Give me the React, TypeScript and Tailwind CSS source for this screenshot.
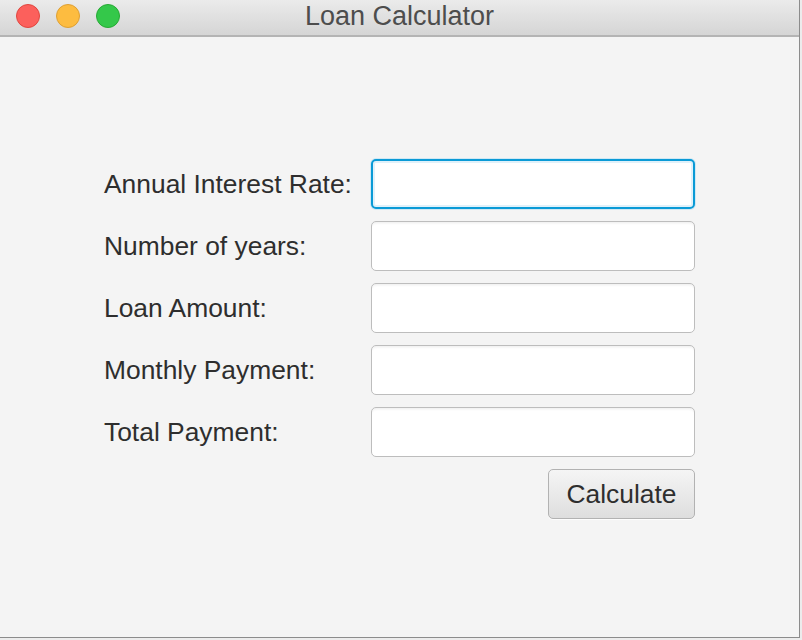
import React from 'react';

const fields = [
  'Annual Interest Rate:',
  'Number of years:',
  'Loan Amount:',
  'Monthly Payment:',
  'Total Payment:',
];

const App: React.FC = () => {
  return (
    <div className="w-[802px] h-[640px] bg-[#ececec] font-['Liberation_Sans',Arial,sans-serif]">
      <div className="w-[800px] h-[638px] bg-[#f4f4f4] border-r border-b border-[#8c8c8c] flex flex-col">
        {/* title bar */}
        <div className="relative h-[37px] shrink-0 bg-gradient-to-b from-[#ebebeb] to-[#d5d5d5] border-b-2 border-[#b4b4b4] flex items-center justify-center">
          <div className="absolute left-[16px] top-[4px] flex gap-[16px]">
            <span className="w-[24px] h-[24px] rounded-full bg-[#fc605c] border border-[#e0473f]" />
            <span className="w-[24px] h-[24px] rounded-full bg-[#fdbc40] border border-[#dea034]" />
            <span className="w-[24px] h-[24px] rounded-full bg-[#34c84a] border border-[#27a934]" />
          </div>
          <span className="text-[27px] leading-none text-[#4d4d4d] -mt-[3px]">Loan Calculator</span>
        </div>

        {/* form */}
        <div className="pt-[122px] pl-[104px]">
          <div className="grid grid-cols-[267px_324px] gap-y-[12px]">
            {fields.map((label, i) => (
              <React.Fragment key={label}>
                <div className="h-[50px] pt-[2px] flex items-center text-[26.4px] text-[#2e2e2e]">{label}</div>
                <input
                  type="text"
                  className={
                    i === 0
                      ? 'h-[50px] w-[324px] rounded-[5px] bg-white border-2 border-[#0a9ad6] outline-none shadow-[0_0_0_1px_#cfe8f4,inset_0_0_0_2px_#e0f1fa]'
                      : 'h-[50px] w-[324px] rounded-[5px] bg-white border border-[#bdbdbd] outline-none shadow-[inset_0_3px_3px_-2px_rgba(0,0,0,0.08)]'
                  }
                />
              </React.Fragment>
            ))}
            <div />
            <div className="flex justify-end">
              <button className="h-[50px] w-[147px] pt-[2px] rounded-[5px] border border-[#b2b2b2] bg-gradient-to-b from-[#f5f5f5] to-[#dedede] text-[26.4px] text-[#2e2e2e] shadow-[0_1px_0_rgba(255,255,255,0.8)]">
                Calculate
              </button>
            </div>
          </div>
        </div>
      </div>
    </div>
  );
};

export default App;
